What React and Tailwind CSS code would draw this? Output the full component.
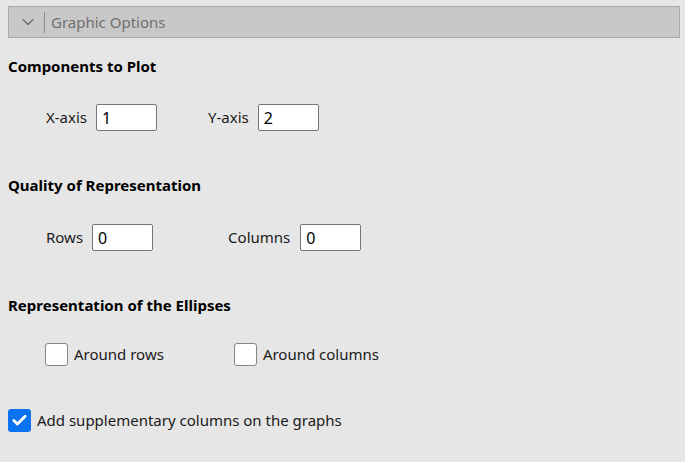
import React from 'react'
import { ChevronDown, Check } from 'lucide-react'

function NumField({ label, value, gap = 'gap-[9px]' }) {
    return (
        <label className={`flex items-center ${gap}`}>
            <span className="text-[15px] text-[#1a1a1a]">{label}</span>
            <input
                type="text"
                defaultValue={value}
                className="w-[61px] h-[27px] bg-white border border-[#767676] rounded-[2px] px-[5px] text-[16px] text-black outline-none"
            />
        </label>
    )
}

function Box({ checked, label }) {
    return (
        <label className="flex items-center gap-[6px]">
            {checked ? (
                <span className="w-[23px] h-[23px] rounded-[3px] bg-[#0b73f0] flex items-center justify-center">
                    <Check className="w-[17px] h-[17px] text-white" strokeWidth={4} />
                </span>
            ) : (
                <span className="w-[23px] h-[23px] rounded-[3px] bg-white border border-[#858585]" />
            )}
            <span className="text-[15px] text-[#1a1a1a]">{label}</span>
        </label>
    )
}

function App() {
    return (
        <div className="w-[685px] h-[462px] bg-[#e6e6e6] pt-[6px] pl-[8px] pr-[5px] font-['Noto_Sans',sans-serif] overflow-hidden">
            {/* Collapsible header */}
            <div className="h-[32px] bg-[#c8c8c8] border border-[#a8a8a8] flex items-center">
                <ChevronDown className="w-[20px] h-[20px] ml-[9px] text-[#6b6b6b]" strokeWidth={1.6} />
                <div className="w-px h-[21px] bg-[#8c8c8c] ml-[6px]" />
                <span className="ml-[6px] text-[15px] text-[#707070]">Graphic Options</span>
            </div>

            <h3 className="mt-[18px] h-[20px] leading-[20px] text-[15px] font-bold text-black">Components to Plot</h3>
            <div className="mt-[28px] pl-[38px] flex items-center gap-[51px]">
                <NumField label="X-axis" value="1" />
                <NumField label="Y-axis" value="2" />
            </div>

            <h3 className="mt-[44px] h-[20px] leading-[20px] text-[15px] font-bold text-black">Quality of Representation</h3>
            <div className="mt-[29px] pl-[38px] flex items-center gap-[75px]">
                <NumField label="Rows" value="0" />
                <NumField label="Columns" value="0" gap="gap-[10px]" />
            </div>

            <h3 className="mt-[44px] h-[20px] leading-[20px] text-[15px] font-bold text-black">Representation of the Ellipses</h3>
            <div className="mt-[28px] pl-[37px] flex items-center gap-[70px]">
                <Box label="Around rows" />
                <Box label="Around columns" />
            </div>

            <div className="mt-[43px] flex items-center">
                <Box checked label="Add supplementary columns on the graphs" />
            </div>
        </div>
    )
}

export default App
